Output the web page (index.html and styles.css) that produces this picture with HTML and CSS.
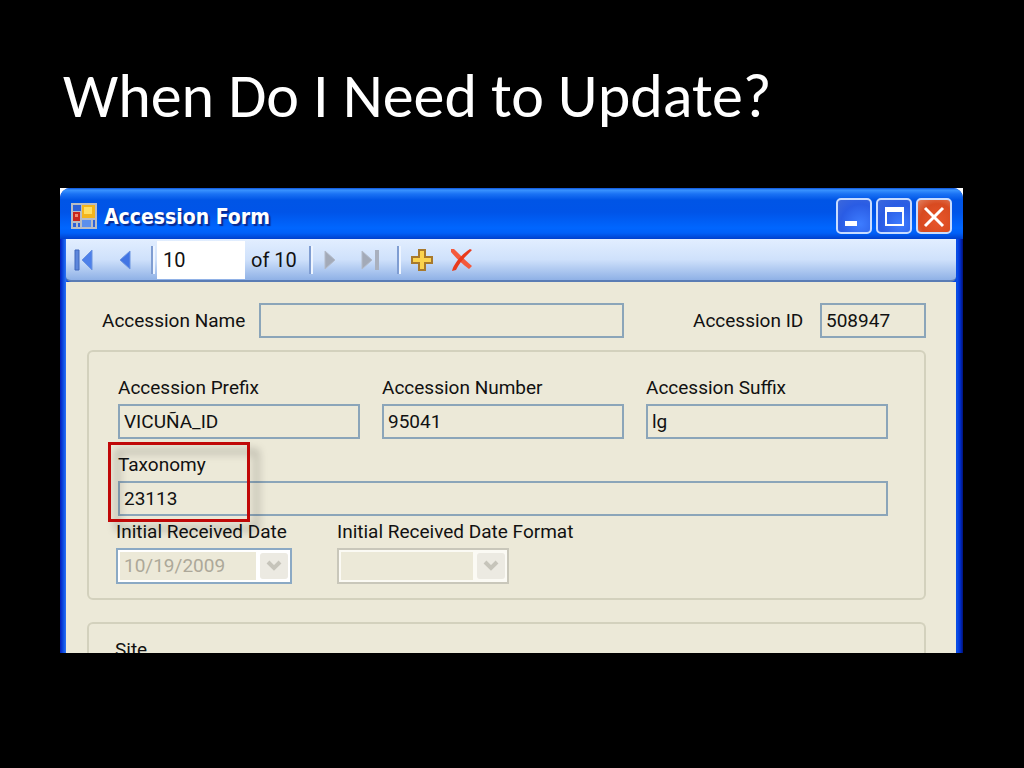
FILE: index.html
```
<!DOCTYPE html>
<html lang="en">
<head>
  <meta charset="UTF-8" />
  <meta name="viewport" content="width=device-width, initial-scale=1.0" />
  <title>When Do I Need to Update?</title>
  <link rel="stylesheet" href="styles.css">
</head>
<body>
  <h1>When Do I Need to Update?</h1>

  <main class="window">
    <div class="frame">
      <header class="titlebar">
        <svg class="app-icon" width="26" height="26" viewBox="0 0 26 26">
          <rect x="0" y="0" width="26" height="26" fill="#b9bdc4"/>
          <rect x="2" y="2" width="8" height="6" fill="#2f62d8"/>
          <rect x="2" y="9" width="7" height="9" fill="#c9261c"/>
          <rect x="4" y="11" width="3" height="3" fill="#f08a70"/>
          <rect x="11" y="2" width="13" height="13" fill="#f3b51c"/>
          <rect x="13" y="4" width="8" height="7" fill="#ffdf62"/>
          <rect x="11" y="17" width="9" height="7" fill="#5b8fec"/>
          <rect x="2" y="20" width="3" height="4" fill="#2f62d8"/>
          <rect x="7" y="20" width="2" height="4" fill="#2f62d8"/>
          <rect x="22" y="17" width="2" height="7" fill="#2f62d8"/>
        </svg>
        <h2>Accession Form</h2>
        <button class="win-btn" type="button" aria-label="Minimize">
          <svg width="32" height="32" viewBox="0 0 32 32"><rect x="7" y="21" width="12" height="5" fill="#fff"/></svg>
        </button>
        <button class="win-btn" type="button" aria-label="Maximize">
          <svg width="32" height="32" viewBox="0 0 32 32"><path d="M7 7h19v19H7zM9 12v12h15V12z" fill="#fff" fill-rule="evenodd"/></svg>
        </button>
        <button class="win-btn close" type="button" aria-label="Close">
          <svg width="32" height="32" viewBox="0 0 32 32"><path d="M7 8L25 26M25 8L7 26" stroke="#fff" stroke-width="3"/></svg>
        </button>
      </header>

      <nav class="toolbar">
        <button type="button" aria-label="Move first">
          <svg width="20" height="22" viewBox="0 0 20 22"><path d="M1 1h4v20H1z" fill="#5c86dc" stroke="#3f66bb"/><path d="M18 1v20L8 11z" fill="#4d80ea" stroke="#6b93e0"/></svg>
        </button>
        <button class="prev" type="button" aria-label="Move previous">
          <svg width="20" height="22" viewBox="0 0 20 22"><path d="M15 2v18L5 11z" fill="#4275e4" stroke="#6b93e0"/></svg>
        </button>
        <span class="sep"></span>
        <input class="position" type="text" value="10" aria-label="Current position" />
        <span class="count">of 10</span>
        <span class="sep"></span>
        <button class="next" type="button" aria-label="Move next" disabled>
          <svg width="20" height="22" viewBox="0 0 20 22"><path d="M4 2v18L14 11z" fill="#a3aab8" stroke="#b3bac8"/></svg>
        </button>
        <button class="last" type="button" aria-label="Move last" disabled>
          <svg width="20" height="22" viewBox="0 0 20 22"><path d="M1 2v18L11 11z" fill="#a3aab8" stroke="#b3bac8"/><path d="M14 1h4v20h-4z" fill="#a9b0be"/></svg>
        </button>
        <span class="sep"></span>
        <button class="add" type="button" aria-label="Add new">
          <svg width="22" height="22" viewBox="0 0 22 22"><path d="M8 1h6v7h7v6h-7v7H8v-7H1V8h7z" fill="#fbd34e" stroke="#a8792c" stroke-width="2"/></svg>
        </button>
        <button class="delete" type="button" aria-label="Delete">
          <svg width="24" height="24" viewBox="0 0 24 24"><path d="M1 1L4 1C9 6 16 13 22 18L19 21C12 16 6 10 1 4z" fill="#f4593c"/><path d="M22 2C16 8 9 15 6 22L2 23C4 15 12 6 20 1z" fill="#e93a1c"/></svg>
        </button>
      </nav>

      <form class="content">
        <div class="name-row">
          <label class="name-label" for="accName">Accession Name</label>
          <input class="name-input" type="text" id="accName" readonly />
          <label class="id-label" for="accId">Accession ID</label>
          <input class="id-input" type="text" id="accId" value="508947" readonly />
        </div>

        <section class="group">
          <div class="columns">
            <div class="field">
              <label for="prefix">Accession Prefix</label>
              <input type="text" id="prefix" value="VICUÑA_ID" readonly />
            </div>
            <div class="field">
              <label for="number">Accession Number</label>
              <input type="text" id="number" value="95041" readonly />
            </div>
            <div class="field">
              <label for="suffix">Accession Suffix</label>
              <input type="text" id="suffix" value="lg" readonly />
            </div>
          </div>

          <div class="field taxonomy">
            <label for="taxonomy">Taxonomy</label>
            <input type="text" id="taxonomy" value="23113" readonly />
            <span class="highlight"></span>
          </div>

          <div class="dates">
            <div class="field">
              <label for="received">Initial Received Date</label>
              <div class="combo dated">
                <select id="received" disabled><option>10/19/2009</option></select>
                <svg width="28" height="26" viewBox="0 0 28 26"><rect width="28" height="26" rx="3" fill="#eceae2"/><path d="M8 9l6 6 6-6" fill="none" stroke="#c6c4ba" stroke-width="4"/></svg>
              </div>
            </div>
            <div class="field">
              <label for="format">Initial Received Date Format</label>
              <div class="combo">
                <select id="format" disabled><option></option></select>
                <svg width="28" height="26" viewBox="0 0 28 26"><rect width="28" height="26" rx="3" fill="#eceae2"/><path d="M8 9l6 6 6-6" fill="none" stroke="#c6c4ba" stroke-width="4"/></svg>
              </div>
            </div>
          </div>
        </section>

        <section class="group site">
          <span>Site</span>
        </section>
      </form>
    </div>
  </main>
</body>
</html>
```
FILE: styles.css
```
* {
  box-sizing: border-box;
}
body {
  margin: 0;
  padding: 60px 61px 60px 60px;
  background: #000;
  color: #111;
  font-family: Roboto, Arial, sans-serif;
  font-size: 19px;
}
h1 {
  margin: 0 0 56px;
  padding-left: 3px;
  color: #fff;
  font-family: Carlito, Lato, sans-serif;
  font-size: 62px;
  font-weight: 400;
  line-height: 72px;
  white-space: nowrap;
}
button {
  padding: 0;
  border: 0;
  background: none;
}
svg {
  display: block;
}
input, select {
  font: inherit;
  color: inherit;
}

/* window frame */
.window {
  background: linear-gradient(#fff 12px, #000 12px);
}
.frame {
  padding: 0 7px 0 6px;
  border-radius: 10px 10px 0 0;
  background: linear-gradient(90deg, #0019b8, #0848e0 3px, #2a72f4 6px, #0848e0 7px, #0848e0 calc(100% - 7px), #0a50ea calc(100% - 6px), #0030d0 calc(100% - 3px), #001278);
  overflow: hidden;
}
.titlebar {
  display: flex;
  align-items: center;
  gap: 4px;
  height: 51px;
  margin: 0 -7px 0 -6px;
  padding: 4px 11px 0 11px;
  background: linear-gradient(#0a50d8, #3a94ff 2px, #1a72f4 6px, #0055e6 12px, #0054e8 24px, #0066ff 40px, #0060f8 45px, #0040cc);
}
.titlebar h2 {
  flex: 1;
  margin: 0;
  padding: 2px 0 0 3px;
  color: #fff;
  font-family: "DejaVu Sans Condensed", "Noto Sans", sans-serif;
  font-size: 21px;
  font-weight: 700;
  text-shadow: 2px 2px 1px #0a2a90;
}
.win-btn {
  border: 2px solid #c8dcff;
  border-radius: 5px;
  background: radial-gradient(circle at 70% 75%, #3d7cff, #2a5ce4 60%, #3c68dc);
}
.win-btn.close {
  background: radial-gradient(circle at 60% 65%, #e8562a, #d84a20 60%, #e08060);
}

/* record navigator */
.toolbar {
  display: flex;
  align-items: center;
  height: 43px;
  padding-left: 8px;
  border-bottom: 2px solid #5a7cb4;
  border-radius: 0 0 5px 5px;
  background: linear-gradient(#e2eeff, #cfe1fb 50%, #8fb1e6);
  font-size: 20px;
}
.prev {
  margin-left: 21px;
}
.sep {
  width: 4px;
  height: 28px;
  margin-left: 16px;
  border-left: 2px solid #7f9dd2;
  border-right: 2px solid #eef5ff;
}
.position {
  width: 88px;
  height: 38px;
  margin-left: 2px;
  padding: 0 6px;
  border: 0;
  background: #fff;
}
.count {
  margin-left: 6px;
}
.count + .sep {
  margin-left: 12px;
}
.next {
  margin-left: 8px;
}
.last {
  margin-left: 20px;
}
.add {
  margin-left: 10px;
}
.delete {
  margin-left: 17px;
}

/* form */
.content {
  padding: 21px 30px 0 21px;
  background: #ece9d8;
}
.content input {
  width: 100%;
  height: 35px;
  padding: 0 4px;
  border: 2px solid #8ba5b9;
  background: transparent;
}
.name-row {
  display: flex;
  align-items: center;
  padding-left: 15px;
}
.name-label {
  width: 157px;
}
.content .name-input {
  flex: 1;
  min-width: 0;
}
.id-label {
  width: 127px;
  margin-left: 69px;
}
.content .id-input {
  width: 106px;
}
.group {
  margin-top: 12px;
  padding: 24px 36px 14px 29px;
  border: 2px solid #d3d1bd;
  border-radius: 6px;
}
.columns {
  display: grid;
  grid-template-columns: repeat(3, 1fr);
  gap: 22px;
}
.field {
  display: flex;
  flex-direction: column;
  gap: 4px;
  line-height: 24px;
}
.taxonomy {
  position: relative;
  margin-top: 14px;
}
.highlight {
  position: absolute;
  left: -10px;
  top: -11px;
  width: 142px;
  height: 80px;
  border: 3px solid #c00808;
  filter: drop-shadow(8px 8px 4px rgba(0, 0, 0, 0.35));
}
.dates {
  display: flex;
  gap: 45px;
  margin: 4px 0 0 -2px;
}
.combo {
  display: flex;
  align-items: center;
  width: 172px;
  height: 36px;
  padding: 2px;
  border: 2px solid #c9c7ba;
  background: #fbfaf4;
}
.combo.dated {
  width: 176px;
  border-color: #8ba9c4;
  background: #fff;
}
.combo select {
  flex: 1;
  height: 28px;
  min-width: 0;
  margin-right: 4px;
  padding: 0 4px;
  border: 0;
  appearance: none;
  background: #ece9d8;
  color: #aca899;
  opacity: 1;
}
.site {
  height: 31px;
  margin-top: 22px;
  padding: 14px 26px 0;
  border-bottom: 0;
  border-radius: 6px 6px 0 0;
  line-height: 24px;
  overflow: hidden;
}
```
